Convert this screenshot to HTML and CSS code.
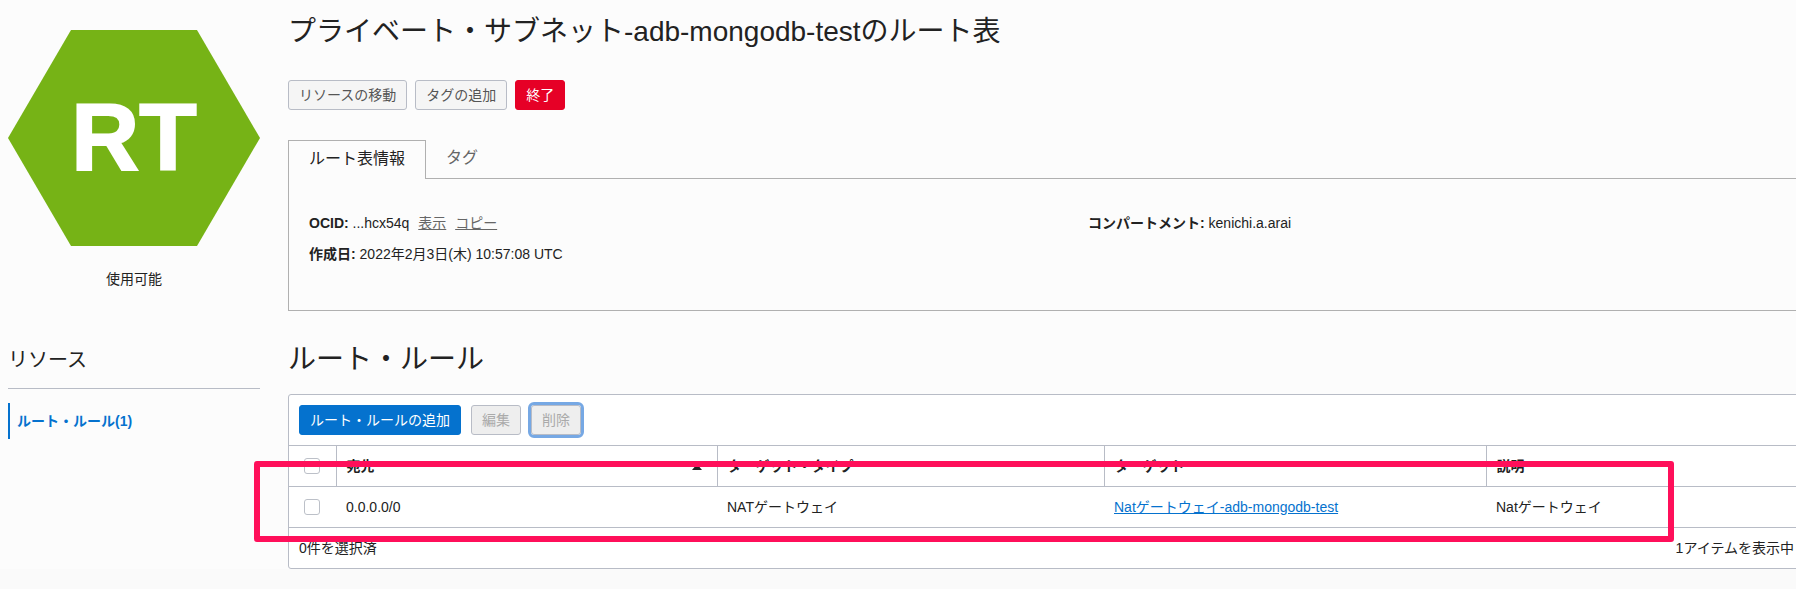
FILE: index.html
```html
<!DOCTYPE html>
<html lang="ja">
<head>
<meta charset="utf-8">
<title>ルート表</title>
<link rel="stylesheet" href="styles.css">
</head>
<body>
<div class="page">
  <aside class="side">
    <div class="hex">RT</div>
    <div class="status">使用可能</div>
    <h3 class="res-title">リソース</h3>
    <nav class="res-nav"><a href="#">ルート・ルール(1)</a></nav>
  </aside>
  <main class="main">
    <h1 class="title">プライベート・サブネット-adb-mongodb-testのルート表</h1>
    <div class="actions">
      <button class="btn">リソースの移動</button>
      <button class="btn">タグの追加</button>
      <button class="btn danger">終了</button>
    </div>
    <div class="tabs">
      <div class="tab active">ルート表情報</div>
      <div class="tab">タグ</div>
    </div>
    <section class="panel">
      <div class="info">
        <div class="info-col">
          <p class="row"><b>OCID:</b> ...hcx54q <a class="mute first" href="#">表示</a> <a class="mute" href="#">コピー</a></p>
          <p class="row"><b>作成日:</b> 2022年2月3日(木) 10:57:08 UTC</p>
        </div>
        <div class="info-col wide">
          <p class="row"><b>コンパートメント:</b> kenichi.a.arai</p>
        </div>
      </div>
    </section>
    <h2 class="subtitle">ルート・ルール</h2>
    <section class="box">
      <div class="toolbar">
        <button class="btn primary">ルート・ルールの追加</button>
        <button class="btn disabled">編集</button>
        <button class="btn disabled focus">削除</button>
      </div>
      <table class="grid">
        <colgroup>
          <col class="c0"><col class="c1"><col class="c2"><col class="c3"><col>
        </colgroup>
        <thead>
          <tr>
            <th class="chk"><span class="cb"></span></th>
            <th><div class="sort">宛先<span class="arrow"></span></div></th>
            <th>ターゲット・タイプ</th>
            <th>ターゲット</th>
            <th>説明</th>
          </tr>
        </thead>
        <tbody>
          <tr>
            <td class="chk"><span class="cb"></span></td>
            <td>0.0.0.0/0</td>
            <td>NATゲートウェイ</td>
            <td><a class="link" href="#">Natゲートウェイ-adb-mongodb-test</a></td>
            <td>Natゲートウェイ</td>
          </tr>
        </tbody>
      </table>
      <div class="foot"><span>0件を選択済</span><span>1アイテムを表示中</span></div>
    </section>
  </main>
  <div class="mark"></div>
</div>
</body>
</html>
```

FILE: styles.css
```css
* { box-sizing: border-box; }
html, body { margin: 0; height: 589px; overflow: hidden; background: #fafafa; }
body { font: 14px/20px "Liberation Sans", "Noto Sans CJK JP", sans-serif; color: #222; }
.page { position: relative; display: flex; height: 589px; padding-left: 8px; width: 1796px; overflow: hidden; background: linear-gradient(#fcfcfc 569px, #fafafa 569px); }

.side { flex: 0 0 252px; padding-top: 30px; }
.hex { height: 216px; display: flex; align-items: center; justify-content: center; background: #76b316; color: #fff; font-size: 94px; font-weight: 700; line-height: 1; -webkit-text-stroke: 2px #fff; clip-path: polygon(25% 0, 75% 0, 100% 50%, 75% 100%, 25% 100%, 0 50%); }
.status { margin-top: 23px; text-align: center; line-height: 20px; }
.res-title { margin: 56px 0 0; padding-bottom: 13px; font-size: 20px; font-weight: 400; line-height: 30px; border-bottom: 1px solid #b8bcc6; }
.res-nav { margin-top: 14px; height: 36px; display: flex; align-items: center; border-left: 2px solid #0572ce; padding-left: 7px; }
.res-nav a { color: #0572ce; font-weight: 700; text-decoration: none; font-size: 14px; }

.main { flex: 0 0 1520px; min-width: 0; margin-left: 28px; padding-top: 15px; }
.title { margin: 0; font-size: 28px; font-weight: 400; line-height: 34px; }
.actions { display: flex; gap: 8px; margin-top: 31px; }
.btn { height: 30px; padding: 0 10px; font: inherit; font-size: 14px; border: 1px solid #b8bcc6; border-radius: 3px; background: #f5f5f5; color: #555; white-space: nowrap; }
.danger { background: #e60026; border-color: #e60026; color: #fff; }
.primary { background: #0572ce; border-color: #0572ce; color: #fff; }
.disabled { background: #eee; color: #aaa; }
.focus { outline: 3px solid #76a8e4; outline-offset: 0; }

.tabs { display: flex; margin-top: 30px; height: 39px; border-bottom: 1px solid #b0b0b0; }
.tab { height: 38px; padding: 0 20px; font-size: 16px; line-height: 36px; color: #666; }
.tab.active { height: 39px; width: 138px; border: 1px solid #b0b0b0; border-bottom: 0; background: #fcfcfc; color: #222; }
.panel { height: 132px; border-left: 1px solid #b0b0b0; border-bottom: 1px solid #b0b0b0; padding: 34px 20px 0; }
.info { display: flex; }
.info-col { flex: 0 0 779px; }
.info-col.wide { flex: 1 1 0; min-width: 0; }
.row { margin: 0 0 11px; line-height: 20px; }
.mute { color: #666; }
.mute.first { margin-left: 5px; margin-right: 5px; }

.subtitle { margin: 31px 0 0; font-size: 28px; font-weight: 400; line-height: 36px; }
.box { margin-top: 16px; height: 175px; background: #fff; border: 1px solid #b8bcc6; border-radius: 3px; overflow: hidden; }
.toolbar { display: flex; align-items: center; gap: 10px; height: 50px; padding: 0 10px; }
.grid { width: 100%; border-collapse: collapse; table-layout: fixed; }
.c0 { width: 47px; }
.c1 { width: 381px; }
.c2 { width: 387px; }
.c3 { width: 382px; }
th, td { height: 41px; padding: 0 10px; text-align: left; font-weight: 400; border-top: 1px solid #b8bcc6; border-bottom: 1px solid #b8bcc6; }
th { font-weight: 700; border-left: 1px solid #b8bcc6; }
th:first-child { border-left: 0; }
th.chk, td.chk { padding: 0 0 0 15px; }
.cb { display: block; width: 16px; height: 16px; border: 1px solid #bcc0c8; border-radius: 3px; background: #fff; }
.sort { display: flex; justify-content: space-between; align-items: center; }
.arrow { width: 0; height: 0; margin: 2px 5px 0 0; border: 5px solid transparent; border-top: 0; border-bottom: 6px solid #222; }
.link { color: #0572ce; }
.foot { display: flex; justify-content: space-between; padding: 10px 13px 0 10px; }

.mark { position: absolute; left: 254px; top: 461px; width: 1420px; height: 81px; border: 6px solid #ff0f5a; border-radius: 3px; }
```
